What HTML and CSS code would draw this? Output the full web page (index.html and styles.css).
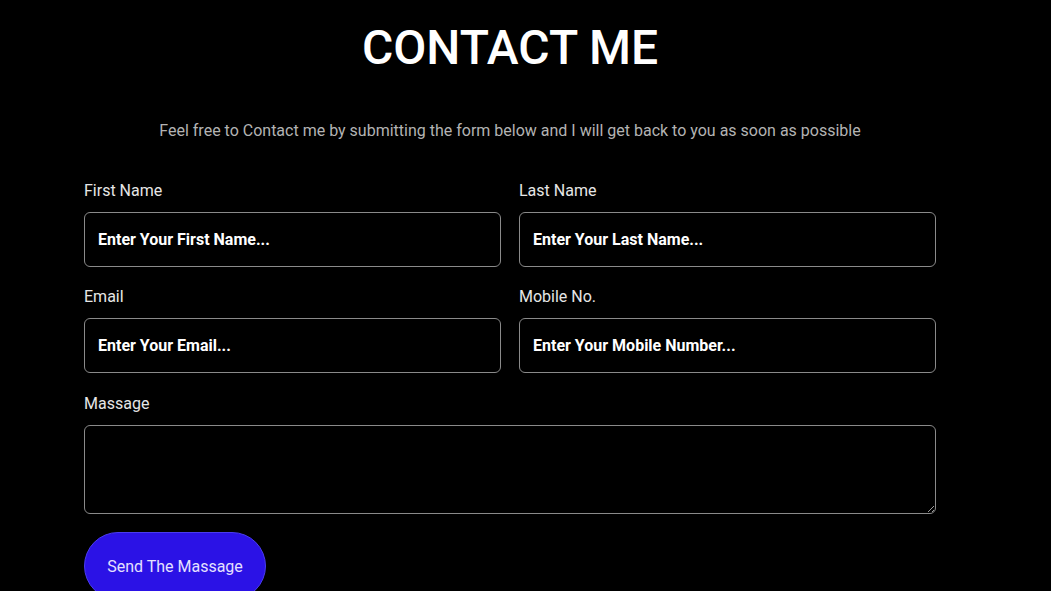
FILE: index.html
```html
<!DOCTYPE html>
<html lang="en">
<head>
<meta charset="utf-8">
<title>Contact Me</title>
<link rel="stylesheet" href="styles.css">
</head>
<body>
<main class="page">
  <h1 class="title">CONTACT ME</h1>
  <p class="subtitle">Feel free to Contact me by submitting the form below and I will get back to you as soon as possible</p>
  <form class="form">
    <div class="grid">
      <div class="field">
        <label class="label" for="fn">First Name</label>
        <input class="input" id="fn" type="text" placeholder="Enter Your First Name...">
      </div>
      <div class="field">
        <label class="label" for="ln">Last Name</label>
        <input class="input" id="ln" type="text" placeholder="Enter Your Last Name...">
      </div>
      <div class="field">
        <label class="label" for="em">Email</label>
        <input class="input" id="em" type="email" placeholder="Enter Your Email...">
      </div>
      <div class="field">
        <label class="label" for="mb">Mobile No.</label>
        <input class="input" id="mb" type="tel" placeholder="Enter Your Mobile Number...">
      </div>
      <div class="field full">
        <label class="label" for="ms">Massage</label>
        <textarea class="textarea" id="ms"></textarea>
      </div>
    </div>
    <button class="btn" type="button">Send The Massage</button>
  </form>
</main>
</body>
</html>
```
FILE: styles.css
```css
* { box-sizing: border-box; }
html, body { margin: 0; padding: 0; background: #000; }
body {
  font-family: Roboto, "Liberation Sans", sans-serif;
  color: #fff;
}
.page {
  width: 1020px;
  display: flex;
  flex-direction: column;
  align-items: center;
}
.title {
  margin: 20px 0 0;
  font-size: 48px;
  font-weight: 500;
  line-height: 56px;
  letter-spacing: 0;
}
.subtitle {
  margin: 45px 0 0;
  font-size: 16px;
  line-height: 20px;
  color: #b3b3b3;
}
.form {
  width: 852px;
  margin-top: 40px;
}
.grid {
  display: grid;
  grid-template-columns: 417px 417px;
  column-gap: 18px;
  row-gap: 20px;
}
.field { display: flex; flex-direction: column; }
.field.full { grid-column: 1 / 3; margin-top: 1px; }
.label {
  font-size: 16px;
  line-height: 20px;
  color: #e6e6e6;
  margin-bottom: 11px;
}
.input, .textarea {
  width: 100%;
  background: #000;
  border: 1px solid #8a8a8a;
  border-radius: 6px;
  color: #fff;
  font-family: Roboto, "Liberation Sans", sans-serif;
  font-size: 16px;
  font-weight: 700;
  padding: 0 13px;
  outline: none;
}
.input { height: 55px; }
.input::placeholder { color: #fff; opacity: 1; font-weight: 700; }
.textarea { height: 89px; resize: vertical; display: block; }
.btn {
  margin-top: 18px;
  width: 182px;
  height: 68px;
  border-radius: 34px;
  border: 1px solid #4a3cf0;
  background: #2b12e6;
  color: #e4e0ff;
  font-family: Roboto, "Liberation Sans", sans-serif;
  font-size: 16px;
  cursor: pointer;
}
```
